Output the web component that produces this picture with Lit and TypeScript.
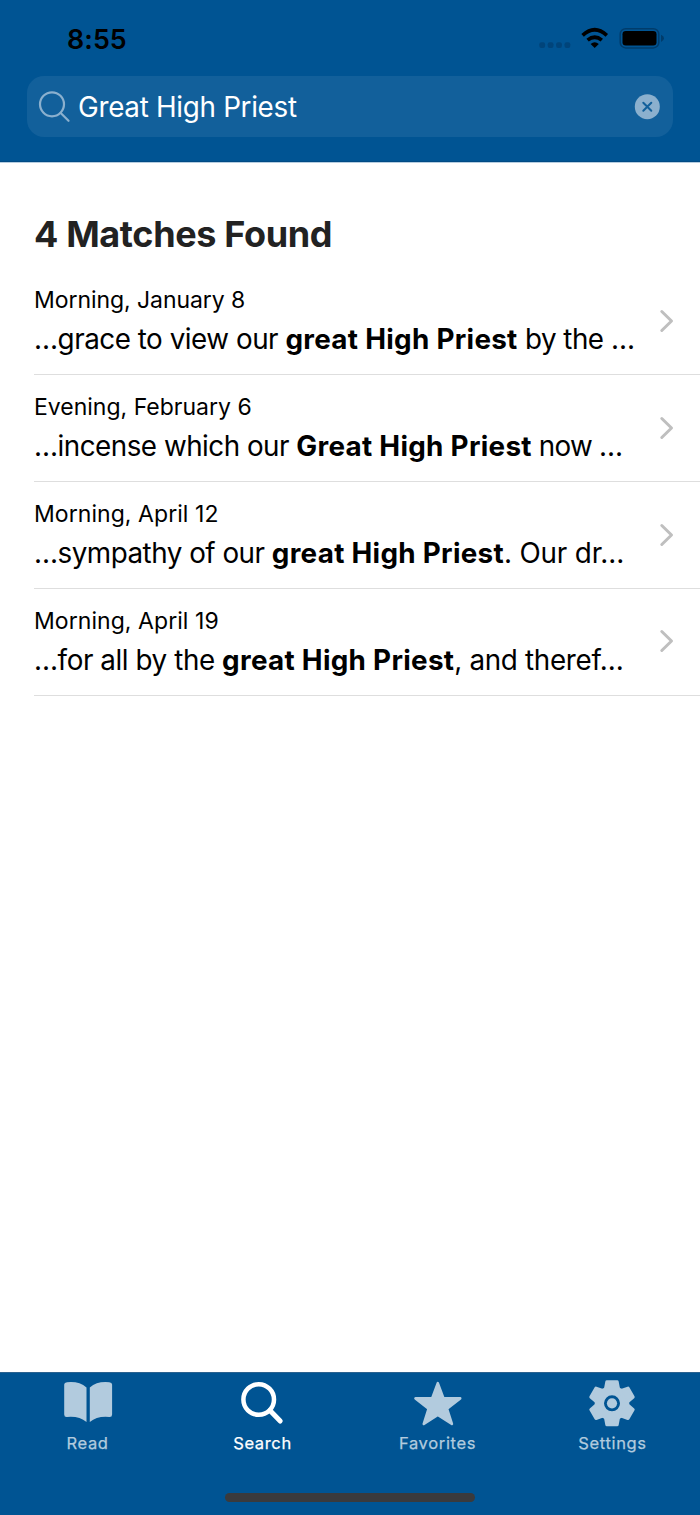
import { LitElement, html, css, svg } from "lit";
import { customElement } from "lit/decorators.js";

const results = [
  { id: "r1", date: "Morning, January 8", before: "…grace to view our ", match: "great High Priest", after: " by the …" },
  { id: "r2", date: "Evening, February 6", before: "…incense which our ", match: "Great High Priest", after: " now …" },
  { id: "r3", date: "Morning, April 12", before: "…sympathy of our ", match: "great High Priest", after: ". Our dr…" },
  { id: "r4", date: "Morning, April 19", before: "…for all by the ", match: "great High Priest", after: ", and theref…" },
];

const bookIcon = svg`
  <path d="M6 3.300Q3.200 3.500 3.200 5.500V35.500Q3.200 38.200 6 38Q18 36.800 25.500 43V8.500Q18 2 6 3.300Z"/>
  <path d="M48.300 3.300Q51.100 3.500 51.100 5.500V35.500Q51.100 38.200 48.300 38Q36.300 36.800 28.800 43V8.500Q36.300 2 48.300 3.300Z"/>`;
const searchIcon = svg`
  <circle cx="22.700" cy="20.500" r="15.300" fill="none" stroke="currentColor" stroke-width="4.500"/>
  <path d="M34 31.500L44.200 42" fill="none" stroke="currentColor" stroke-width="5" stroke-linecap="round"/>`;
const starIcon = svg`
  <path d="M26.800 4.200L32.300 19L49.200 19.400L36 29.700L40.900 45L26.800 36L12.800 45L17.600 29.700L4.500 19.400L21.300 19Z" stroke="currentColor" stroke-width="2.600" stroke-linejoin="round"/>`;
const gearTooth = "M-5.200 -21.500H5.200L6.800 -13H-6.800Z";
const gearIcon = svg`
  <g transform="translate(26 24.300)">
    <path fill-rule="evenodd" d="M-17.300 0A17.300 17.300 0 1 1 17.300 0A17.300 17.300 0 1 1 -17.300 0ZM-8 0A8 8 0 1 0 8 0A8 8 0 1 0 -8 0Z"/>
    ${[0, 60, 120, 180, 240, 300].map(
      (a) => svg`<path d=${gearTooth} transform="rotate(${a})" stroke="currentColor" stroke-width="3" stroke-linejoin="round"/>`
    )}
    <circle r="5.100"/>
  </g>`;

const tabs = [
  { id: "read", label: "Read", icon: bookIcon },
  { id: "search", label: "Search", icon: searchIcon },
  { id: "favorites", label: "Favorites", icon: starIcon },
  { id: "settings", label: "Settings", icon: gearIcon },
];

@customElement("app-root")
export class AppRoot extends LitElement {
  static styles = css`
    :host {
      display: flex;
      flex-direction: column;
      width: 700px;
      height: 1515px;
      overflow: hidden;
      background: #fff;
      color: #000;
      font-family: Inter, "Liberation Sans", sans-serif;
    }
    * { box-sizing: border-box; }
    svg { display: block; flex: none; }
    .header {
      height: 162px;
      flex: none;
      background: #005493;
      border-bottom: 1px solid #004a84;
    }
    .status {
      height: 76px;
      display: flex;
      justify-content: space-between;
      padding: 0 36px 0 67px;
    }
    .time {
      font-size: 26.800px;
      font-weight: 600;
      line-height: 32px;
      padding-top: 23px;
      letter-spacing: 0.100px;
    }
    .field {
      height: 61px;
      margin: 0 27px;
      padding: 0 13px 0 11px;
      border-radius: 17px;
      background: #12609b;
      display: flex;
      align-items: center;
    }
    .query {
      flex: 1;
      padding-left: 8px;
      font-size: 27.800px;
      line-height: 34px;
      letter-spacing: -0.300px;
      color: #fff;
      white-space: nowrap;
    }
    .content { flex: 1; border-top: 1px solid #b5cde0; }
    .title {
      margin: 0;
      padding: 49px 0 0 34px;
      font-size: 36px;
      font-weight: 700;
      line-height: 44px;
      letter-spacing: -0.360px;
      color: #222;
      white-space: nowrap;
    }
    .list { padding: 12px 0 0 34px; }
    .row {
      height: 107px;
      display: flex;
      justify-content: space-between;
      border-bottom: 1.500px solid #dedede;
      white-space: nowrap;
    }
    .text { padding-top: 17px; }
    .date { font-size: 23px; line-height: 30px; }
    .r1 .date { letter-spacing: -0.060px; }
    .r3 .date, .r4 .date { letter-spacing: 0.060px; }
    .excerpt {
      margin-top: 5px;
      font-size: 27.800px;
      line-height: 38px;
      white-space: pre;
    }
    .excerpt b { font-weight: 700; letter-spacing: 0.300px; }
    .r1 .before { letter-spacing: -0.470px; }
    .r2 .before { letter-spacing: -0.500px; }
    .r3 .before { letter-spacing: -0.500px; }
    .r4 .before { letter-spacing: -0.420px; }
    .r1 .after { letter-spacing: -0.500px; }
    .r2 .after { letter-spacing: -0.750px; }
    .r3 .after { letter-spacing: -0.160px; }
    .r4 .after { letter-spacing: -0.320px; }
    .chevron { margin: 39.500px 25.500px 0 0; }
    .r4 .chevron { margin-top: 39px; }
    .tabbar {
      height: 143px;
      flex: none;
      background: #005493;
      border-top: 1px solid #2a6290;
      display: flex;
      flex-direction: column;
      justify-content: space-between;
      align-items: center;
      padding-bottom: 13px;
    }
    .tabs { display: grid; grid-template-columns: repeat(4, 1fr); width: 100%; }
    .tab {
      display: flex;
      flex-direction: column;
      align-items: center;
      padding-top: 6px;
      color: #b2cbde;
      font-size: 16.500px;
      font-weight: 400;
      line-height: 20px;
      letter-spacing: 0.650px;
    }
    .tab svg { fill: currentColor; margin-bottom: 6px; }
    .tab span { -webkit-text-stroke: 0.250px currentColor; }
    .active { color: #fff; }
    .indicator { width: 250px; height: 9px; border-radius: 5px; background: #3a3a3c; }
  `;

  render() {
    return html`
      <div class="header">
        <div class="status">
          <div class="time">8:55</div>
          <svg width="125" height="76" viewBox="539 0 125 76">
            <g fill="#00447a">
              <rect x="539.300" y="42.200" width="5.800" height="5.800" rx="2"/><rect x="547.700" y="42.200" width="5.800" height="5.800" rx="2"/><rect x="556.100" y="42.200" width="5.800" height="5.800" rx="2"/><rect x="564.500" y="42.200" width="5.800" height="5.800" rx="2"/>
            </g>
            <g fill="none" stroke="#000" stroke-width="3.700">
              <path d="M582.600 35.300Q594.700 24.200 606.800 35.300"/>
              <path d="M587.600 40.200Q594.700 34.300 601.800 40.200"/>
            </g>
            <path d="M590.600 44Q594.700 40.700 598.800 44L594.700 48Z"/>
            <rect x="620.200" y="28.700" width="38.600" height="19.200" rx="5.500" fill="none" stroke="#003c6b" stroke-width="1.500"/>
            <rect x="622.500" y="31" width="34" height="14.600" rx="3.300"/>
            <path d="M661 34.700Q664 36 664 38.300T661 41.900Z" fill="#003c6b"/>
          </svg>
        </div>
        <div class="field">
          <svg width="32" height="32" viewBox="38 91 32 32" fill="none" stroke="#8bb0ce" stroke-width="2.200" stroke-linecap="round">
            <circle cx="52" cy="104.300" r="12"/><path d="M60.700 113L68.500 120.800"/>
          </svg>
          <div class="query">Great High Priest</div>
          <svg width="26" height="26" viewBox="0 0 26 26">
            <circle cx="13.300" cy="12.700" r="12.500" fill="#8bb0ce"/>
            <path d="M9.300 8.700L17.300 16.700M17.300 8.700L9.300 16.700" stroke="#12609b" stroke-width="2" stroke-linecap="round"/>
          </svg>
        </div>
      </div>
      <div class="content">
        <h1 class="title">4 Matches Found</h1>
        <div class="list">
          ${results.map(
            (r) => html`<div class="row ${r.id}">
              <div class="text">
                <div class="date">${r.date}</div>
                <div class="excerpt"><span class="before">${r.before}</span><b>${r.match}</b><span class="after">${r.after}</span></div>
              </div>
              <svg class="chevron" width="16" height="26" viewBox="0 0 16 26" fill="none" stroke="#bfbfbf" stroke-width="3" stroke-linecap="round" stroke-linejoin="round">
                <path d="M2.800 3.500L12.500 13L2.800 22.500"/>
              </svg>
            </div>`
          )}
        </div>
      </div>
      <div class="tabbar">
        <div class="tabs">
          ${tabs.map(
            (t) => html`<div class="tab ${t.id} ${t.id === "search" ? "active" : ""}">
              <svg width="54" height="48" viewBox="0 0 54 48">${t.icon}</svg>
              <span>${t.label}</span>
            </div>`
          )}
        </div>
        <div class="indicator"></div>
      </div>
    `;
  }
}
